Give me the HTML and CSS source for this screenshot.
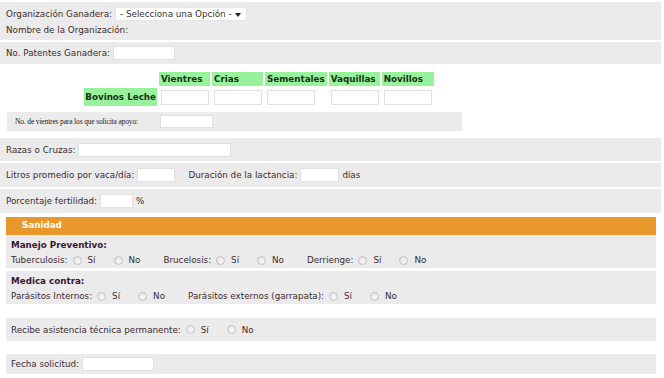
FILE: index.html
```html
<!DOCTYPE html>
<html lang="es">
	<head>
		<meta charset="utf-8">
		<link rel="stylesheet" href="styles.css">
	</head>
	<body>
		<div class="row org">
			<div class="line">
				<label>Organización Ganadera:</label>
				<div class="select">- Selecciona una Opción -<span class="arrow"></span></div>
			</div>
			<div class="line">
				<label>Nombre de la Organización:</label>
			</div>
		</div>
		<div class="row patentes">
			<label>No. Patentes Ganadera:</label>
			<input class="txt w62" type="text">
		</div>

		<table class="hato">
			<tr>
				<td></td>
				<th class="c1">Vientres</th>
				<th class="c2">Crias</th>
				<th class="c3">Sementales</th>
				<th class="c4">Vaquillas</th>
				<th class="c5">Novillos</th>
			</tr>
			<tr>
				<th class="lbl">Bovinos Leche</th>
				<td><input class="txt cell" type="text"></td>
				<td><input class="txt cell" type="text"></td>
				<td><input class="txt cell" type="text"></td>
				<td><input class="txt cell" type="text"></td>
				<td><input class="txt cell" type="text"></td>
			</tr>
		</table>

		<div class="apoyo">
			<span class="small">No. de vientres para los que solicita apoyo:</span>
			<input class="txt w53" type="text">
		</div>

		<div class="row razas">
			<label>Razas o Cruzas:</label>
			<input class="txt w153" type="text">
		</div>
		<div class="row">
			<label>Litros promedio por vaca/día:</label>
			<input class="txt w38" type="text">
			<label class="gap">Duración de la lactancia:</label>
			<input class="txt w39" type="text">
			<span>días</span>
		</div>
		<div class="row">
			<label>Porcentaje fertilidad:</label>
			<input class="txt w33" type="text">
			<span>%</span>
		</div>

		<div class="section">
			<div class="head">Sanidad</div>
			<div class="box">
				<div class="title">Manejo Preventivo:</div>
				<div class="opts">
					<span class="q">Tuberculosis:</span>
					<input type="radio" name="tb"><span class="o">Sí</span>
					<input type="radio" name="tb"><span class="o end">No</span>
					<span class="q">Brucelosis:</span>
					<input type="radio" name="br"><span class="o">Sí</span>
					<input type="radio" name="br"><span class="o end">No</span>
					<span class="q">Derrienge:</span>
					<input type="radio" name="de"><span class="o">Sí</span>
					<input type="radio" name="de"><span class="o end">No</span>
				</div>
			</div>
			<div class="box medica">
				<div class="title">Medica contra:</div>
				<div class="opts">
					<span class="q">Parásitos Internos:</span>
					<input type="radio" name="pi"><span class="o">Sí</span>
					<input type="radio" name="pi"><span class="o end">No</span>
					<span class="q">Parásitos externos (garrapata):</span>
					<input type="radio" name="pe"><span class="o">Sí</span>
					<input type="radio" name="pe"><span class="o end">No</span>
				</div>
			</div>
			<div class="box single asist">
				<span class="q">Recibe asistencia técnica permanente:</span>
				<input type="radio" name="as"><span class="o">Sí</span>
				<input type="radio" name="as"><span class="o end">No</span>
			</div>
			<div class="box single fecha">
				<label>Fecha solicitud:</label>
				<input class="txt w72" type="text">
			</div>
		</div>
	</body>
</html>
```

FILE: styles.css
```css
* {
	box-sizing: border-box;
}
html {
	background: white;
	font-family: "DejaVu Sans", Verdana, sans-serif;
	font-size: 8.75px;
	color: #3b2a2e;
}
body {
	margin: 0;
	padding-top: 2px;
}
label, span, th {
	white-space: nowrap;
}
.row {
	display: flex;
	align-items: center;
	width: 661px;
	height: 24px;
	margin-bottom: 2px;
	padding-left: 6px;
	background: #ebebeb;
}
.row.org {
	display: block;
	height: 38px;
	padding-top: 4px;
}
.org .line {
	display: flex;
	align-items: center;
	height: 16px;
}
.row.patentes {
	height: 22px;
}
.row.razas {
	height: 23px;
}
.select {
	position: relative;
	margin-left: 3px;
	width: 132px;
	height: 14px;
	padding: 1px 0 0 4px;
	background: white;
	border: 1px solid #e4e4e4;
	color: #333;
}
.select .arrow {
	position: absolute;
	right: 5px;
	top: 5px;
	border-left: 3px solid transparent;
	border-right: 3px solid transparent;
	border-top: 4px solid #222;
}
.txt {
	height: 14px;
	margin: 0 3px 0 3px;
	padding: 0;
	border: 1px solid #e0e0e0;
	background: white;
}
.w62 { width: 62px; }
.w53 { width: 53px; }
.w153 { width: 153px; }
.w38 { width: 38px; }
.w39 { width: 39px; }
.w33 { width: 33px; }
.w72 { width: 72px; }
.gap {
	margin-left: 10px;
}

.hato {
	margin: 6px 0 0 82px;
	border-collapse: separate;
	border-spacing: 2px;
	table-layout: fixed;
	font-weight: bold;
	color: #173017;
}
.hato th {
	background: #98f29c;
	text-align: left;
	padding: 0 2px;
	height: 14px;
	font-size: 8.75px;
}
.hato .c1 { width: 51px; }
.hato .c2 { width: 51px; }
.hato .c3 { width: 61px; }
.hato .c4 { width: 51px; }
.hato .c5 { width: 52px; }
.hato th.lbl {
	width: 73px;
	height: 18px;
	padding: 0 1px 0 0;
	text-align: right;
	font-size: 8.75px;
}
.hato td {
	padding: 0;
}
.txt.cell {
	width: 48px;
	height: 15px;
	margin: 0 0 0 2px;
}

.apoyo {
	display: flex;
	align-items: center;
	width: 455px;
	height: 19px;
	margin: 4px 0 7px 7px;
	padding-left: 8px;
	background: #ebebeb;
}
.apoyo .small {
	font-family: "Liberation Serif", serif;
	font-size: 7.5px;
	letter-spacing: -0.15px;
	width: 142px;
	color: #222;
}
.apoyo .txt {
	height: 13px;
}

.section {
	width: 650px;
	margin: 4px 0 0 6px;
}
.head {
	height: 18px;
	padding: 3px 0 0 16px;
	background: #e8972b;
	color: white;
	font-weight: bold;
}
.box {
	height: 33px;
	padding: 5px 0 0 5px;
	margin-bottom: 3px;
	background: #ebebeb;
}
.box .title {
	font-weight: bold;
	color: #3a1634;
	height: 12px;
}
.opts {
	display: flex;
	align-items: center;
	height: 16px;
}
.box.medica {
	margin-bottom: 14px;
}
.box.single {
	display: flex;
	align-items: center;
	padding-top: 0;
	height: 23px;
}
.box.asist {
	margin-bottom: 13px;
}
.box.fecha {
	height: 20px;
}
.q {
	margin-right: 1px;
}
.o {
	margin-right: 14px;
}
.o.end {
	margin-right: 23px;
}
input[type=radio] {
	appearance: none;
	width: 9px;
	height: 9px;
	margin: 0 6px 0 4px;
	border: 1px solid #c4c4c4;
	border-radius: 50%;
	background: radial-gradient(circle at 60% 60%, #fafafa, #dcdcdc);
}
```
